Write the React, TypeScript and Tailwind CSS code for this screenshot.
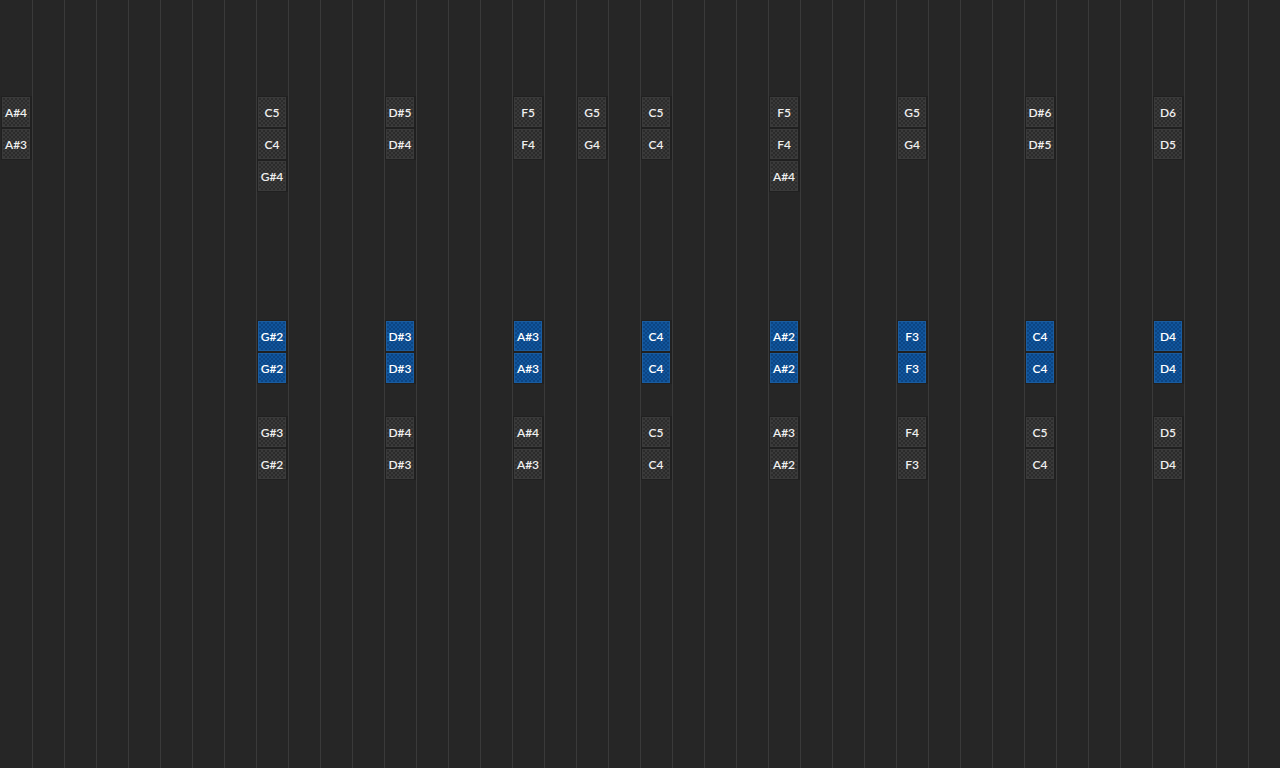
const COLS = 40;
const ROWS = 24;

type Note = { row: number; label: string; active?: boolean };

// column index -> notes placed in that column
const notes: Record<number, Note[]> = {
  0: [
    { row: 3, label: "A#4" },
    { row: 4, label: "A#3" },
  ],
  8: [
    { row: 3, label: "C5" },
    { row: 4, label: "C4" },
    { row: 5, label: "G#4" },
    { row: 10, label: "G#2", active: true },
    { row: 11, label: "G#2", active: true },
    { row: 13, label: "G#3" },
    { row: 14, label: "G#2" },
  ],
  12: [
    { row: 3, label: "D#5" },
    { row: 4, label: "D#4" },
    { row: 10, label: "D#3", active: true },
    { row: 11, label: "D#3", active: true },
    { row: 13, label: "D#4" },
    { row: 14, label: "D#3" },
  ],
  16: [
    { row: 3, label: "F5" },
    { row: 4, label: "F4" },
    { row: 10, label: "A#3", active: true },
    { row: 11, label: "A#3", active: true },
    { row: 13, label: "A#4" },
    { row: 14, label: "A#3" },
  ],
  18: [
    { row: 3, label: "G5" },
    { row: 4, label: "G4" },
  ],
  20: [
    { row: 3, label: "C5" },
    { row: 4, label: "C4" },
    { row: 10, label: "C4", active: true },
    { row: 11, label: "C4", active: true },
    { row: 13, label: "C5" },
    { row: 14, label: "C4" },
  ],
  24: [
    { row: 3, label: "F5" },
    { row: 4, label: "F4" },
    { row: 5, label: "A#4" },
    { row: 10, label: "A#2", active: true },
    { row: 11, label: "A#2", active: true },
    { row: 13, label: "A#3" },
    { row: 14, label: "A#2" },
  ],
  28: [
    { row: 3, label: "G5" },
    { row: 4, label: "G4" },
    { row: 10, label: "F3", active: true },
    { row: 11, label: "F3", active: true },
    { row: 13, label: "F4" },
    { row: 14, label: "F3" },
  ],
  32: [
    { row: 3, label: "D#6" },
    { row: 4, label: "D#5" },
    { row: 10, label: "C4", active: true },
    { row: 11, label: "C4", active: true },
    { row: 13, label: "C5" },
    { row: 14, label: "C4" },
  ],
  36: [
    { row: 3, label: "D6" },
    { row: 4, label: "D5" },
    { row: 10, label: "D4", active: true },
    { row: 11, label: "D4", active: true },
    { row: 13, label: "D5" },
    { row: 14, label: "D4" },
  ],
};

function NoteBlock({ note }: { note: Note }) {
  return (
    <div className="h-8 bg-[#202020] py-px pl-px pr-[2px]">
      <div
        className={
          note.active
            ? "flex h-full w-full items-center justify-center border border-[#1a5c9f] bg-[conic-gradient(#11559c_25%,#0b4584_0_50%,#11559c_0_75%,#0b4584_0)] bg-[length:4px_4px] pt-[2px] text-[12px] font-semibold text-white"
            : "flex h-full w-full items-center justify-center border border-[#3a3a3a] bg-[conic-gradient(#3a3a3a_25%,#2b2b2b_0_50%,#3a3a3a_0_75%,#2b2b2b_0)] bg-[length:4px_4px] pt-[2px] text-[12px] font-semibold text-[#f0f0f0]"
        }
      >
        {note.label}
      </div>
    </div>
  );
}

function Column({ index }: { index: number }) {
  const colNotes = notes[index] ?? [];
  return (
    <div
      className={
        index === 0
          ? "grid w-8 shrink-0 grid-rows-[repeat(24,32px)] border-l border-transparent"
          : "grid w-8 shrink-0 grid-rows-[repeat(24,32px)] border-l border-[#3a3a3a]"
      }
    >
      {Array.from({ length: ROWS }, (_, r) => {
        const n = colNotes.find((x) => x.row === r);
        return n ? <NoteBlock key={r} note={n} /> : <div key={r} />;
      })}
    </div>
  );
}

export default function App() {
  return (
    <main className="flex h-[768px] w-[1280px] overflow-hidden bg-[#262626] font-['Lato','Open_Sans',sans-serif]">
      {Array.from({ length: COLS }, (_, i) => (
        <Column key={i} index={i} />
      ))}
    </main>
  );
}
